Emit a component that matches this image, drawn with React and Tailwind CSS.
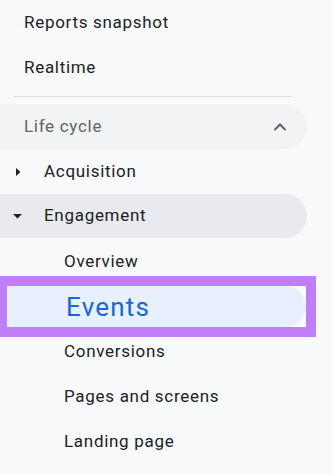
import React from "react";

const font = { fontFamily: "Roboto, 'Noto Sans', sans-serif" };

function Row({ children, className = "", pad = "pl-6" }) {
  return (
    <div className={`h-[45px] flex items-center ${pad} text-[17px] tracking-[0.7px] text-[#202124] ${className}`}>
      {children}
    </div>
  );
}

export default function App() {
  return (
    <div className="w-[332px] h-[474px] bg-[#f8f9fa] overflow-hidden" style={font}>
      <Row>Reports snapshot</Row>
      <Row>Realtime</Row>
      <div className="pt-[6px] pb-[7px] pl-[14px] pr-[41px]">
        <div className="h-px bg-[#dadce0]" />
      </div>
      <div className="h-[45px] w-[307px] flex items-center justify-between pl-6 pr-[20px] rounded-r-full bg-[#f1f3f4] text-[17px] tracking-[0.7px] text-[#5f6368]">
        <span>Life cycle</span>
        <svg width="14" height="10" viewBox="0 0 14 10" fill="none">
          <path d="M1.5 8 L7 2.5 L12.5 8" stroke="#5f6368" strokeWidth="2" />
        </svg>
      </div>
      <div className="h-[45px] flex items-center text-[17px] tracking-[0.7px] text-[#202124]">
        <div className="w-[44px] flex items-center pl-[16px]">
          <svg width="5" height="8" viewBox="0 0 5 8">
            <path d="M0 0 L4.5 4 L0 8 Z" fill="#202124" />
          </svg>
        </div>
        <span>Acquisition</span>
      </div>
      <div className="h-[44px] mb-px w-[307px] flex items-center rounded-r-full bg-[#e8eaed] text-[17px] tracking-[0.7px] text-[#202124]">
        <div className="w-[44px] flex items-center pl-[13px]">
          <svg width="9" height="5" viewBox="0 0 9 5">
            <path d="M0 0 L9 0 L4.5 4.5 Z" fill="#202124" />
          </svg>
        </div>
        <span>Engagement</span>
      </div>
      <Row pad="pl-16">Overview</Row>
      <div className="-my-[8px] relative w-[316px] h-[61px] border-[#bf7ff8] border-t-[10px] border-b-[10px] border-r-[10px] border-l-[7px] bg-[#fbfcfe]">
        <div className="h-full w-[299px] rounded-r-full bg-[#e8f0fe] flex items-center pl-[59px]">
          <span className="text-[26px] tracking-[1.2px] text-[#1967d2] leading-none">Events</span>
        </div>
      </div>
      <Row pad="pl-16">Conversions</Row>
      <Row pad="pl-16">Pages and screens</Row>
      <Row pad="pl-16">Landing page</Row>
    </div>
  );
}
